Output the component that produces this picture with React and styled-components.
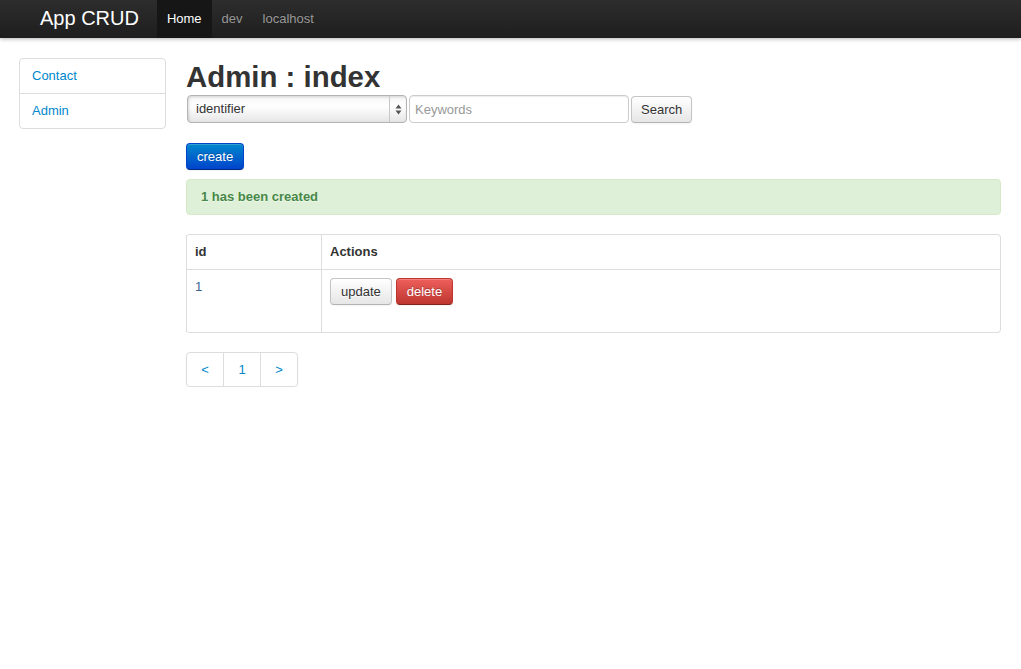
import * as React from "react"
import styled, { createGlobalStyle } from "styled-components"

const GlobalStyle = createGlobalStyle`
  body {
    margin: 0;
    background: #fff;
    font-family: "Liberation Sans", Arial, sans-serif;
    font-size: 13px;
    line-height: 20px;
    color: #333;
  }
`

const App = () => {
  return (
    <>
      <GlobalStyle />
      <Navbar>
        <Brand>App CRUD</Brand>
        <NavItem active>Home</NavItem>
        <NavItem>dev</NavItem>
        <NavItem>localhost</NavItem>
      </Navbar>
      <Main>
        <Sidebar>
          <SideLink>Contact</SideLink>
          <SideLink>Admin</SideLink>
        </Sidebar>
        <Content>
          <Title>Admin : index</Title>
          <SearchForm>
            <SelectBox>
              <SelectLabel>identifier</SelectLabel>
              <SelectArrows>
                <svg width="7" height="11" viewBox="0 0 7 11">
                  <path d="M3.5 0.5 L6.5 4.5 H0.5 Z" fill="#555" />
                  <path d="M3.5 10.5 L6.5 6.5 H0.5 Z" fill="#555" />
                </svg>
              </SelectArrows>
            </SelectBox>
            <Input placeholder="Keywords" />
            <Button compact>Search</Button>
          </SearchForm>
          <ButtonRow>
            <Button variant="primary">create</Button>
          </ButtonRow>
          <Alert>1 has been created</Alert>
          <Table>
            <thead>
              <tr>
                <Th width="118">id</Th>
                <Th>Actions</Th>
              </tr>
            </thead>
            <tbody>
              <tr>
                <Td><IdText>1</IdText></Td>
                <Td>
                  <Actions>
                    <Button>update</Button>
                    <Button variant="danger">delete</Button>
                  </Actions>
                </Td>
              </tr>
            </tbody>
          </Table>
          <Pagination>
            <PageLink>&lt;</PageLink>
            <PageLink>1</PageLink>
            <PageLink>&gt;</PageLink>
          </Pagination>
        </Content>
      </Main>
    </>
  )
}

export default App

const Navbar = styled.div`
  display: flex;
  align-items: stretch;
  height: 38px;
  padding-left: 20px;
  background: linear-gradient(180deg, #2d2d2d 0%, #1e1e1e 100%);
  box-shadow: 0 1px 4px rgba(0, 0, 0, 0.3);
  position: relative;
  z-index: 2;
`
const Brand = styled.div`
  display: flex;
  align-items: center;
  padding: 0 18px 0 20px;
  font-size: 20px;
  color: #fff;
  margin-top: -3px;
`
const NavItem = styled.div`
  display: flex;
  align-items: center;
  padding: 0 10px;
  font-size: 13px;
  color: ${p => (p.active ? "#fff" : "#999")};
  background: ${p => (p.active ? "#161616" : "transparent")};
  text-shadow: 0 -1px 0 rgba(0, 0, 0, 0.25);
`
const Main = styled.div`
  display: flex;
  gap: 20px;
  padding: 20px 20px 0 19px;
`
const Sidebar = styled.div`
  display: flex;
  flex-direction: column;
  width: 147px;
  flex: none;
  align-self: flex-start;
  border: 1px solid #ddd;
  border-radius: 4px;
  box-sizing: border-box;
`
const SideLink = styled.a`
  display: block;
  padding: 7px 12px;
  line-height: 20px;
  color: #0088cc;
  & + & {
    border-top: 1px solid #ddd;
  }
`
const Content = styled.div`
  flex: 1;
  min-width: 0;
`
const Title = styled.h2`
  margin: 0;
  font-size: 29.4px;
  line-height: 37px;
  font-weight: bold;
  color: #333;
`
const SearchForm = styled.div`
  display: flex;
  align-items: center;
  gap: 2px;
  height: 28px;
  margin-left: 1px;
`
const SelectBox = styled.div`
  display: flex;
  width: 220px;
  height: 28px;
  box-sizing: border-box;
  border: 1px solid #b4b4b4;
  border-radius: 4px;
  background: linear-gradient(180deg, #f6f6f6 0%, #ffffff 40%, #e6e6e6 100%);
  box-shadow: inset 1px 1px 3px rgba(0, 0, 0, 0.15);
`
const SelectLabel = styled.div`
  flex: 1;
  padding-left: 8px;
  line-height: 26px;
  color: #333;
`
const SelectArrows = styled.div`
  width: 16px;
  display: flex;
  align-items: center;
  justify-content: center;
  border-left: 1px solid #c8c8c8;
`
const Input = styled.input`
  width: 220px;
  height: 28px;
  box-sizing: border-box;
  border: 1px solid #ccc;
  border-radius: 4px;
  padding: 4px 5px;
  font-family: inherit;
  font-size: 13px;
  color: #555;
  box-shadow: inset 0 1px 1px rgba(0, 0, 0, 0.075);
  outline: none;
  &::placeholder {
    color: #999;
  }
`
const variants = {
  default: `
    color: #333;
    background: linear-gradient(180deg, #ffffff 0%, #e6e6e6 100%);
    border-color: #c5c5c5 #c5c5c5 #b3b3b3;
    text-shadow: 0 1px 1px rgba(255, 255, 255, 0.75);
  `,
  primary: `
    color: #fff;
    background: linear-gradient(180deg, #0088cc 0%, #0044cc 100%);
    border-color: #0044cc #0044cc #002a80;
    text-shadow: 0 -1px 0 rgba(0, 0, 0, 0.25);
  `,
  danger: `
    color: #fff;
    background: linear-gradient(180deg, #ee5f5b 0%, #bd362f 100%);
    border-color: #bd362f #bd362f #802420;
    text-shadow: 0 -1px 0 rgba(0, 0, 0, 0.25);
  `,
}
const Button = styled.button`
  height: 27px;
  box-sizing: border-box;
  padding: 0 ${p => (p.compact ? "9px" : "10px")};
  font-family: inherit;
  font-size: 13px;
  line-height: 25px;
  border: 1px solid;
  border-radius: 4px;
  box-shadow: inset 0 1px 0 rgba(255, 255, 255, 0.2), 0 1px 2px rgba(0, 0, 0, 0.05);
  cursor: pointer;
  ${p => variants[p.variant || "default"]}
`
const ButtonRow = styled.div`
  display: flex;
  margin-top: 20px;
`
const Alert = styled.div`
  margin-top: 9px;
  padding: 7px 14px;
  line-height: 20px;
  background: #dff0d8;
  border: 1px solid #d6e9c6;
  border-radius: 4px;
  color: #468847;
  font-weight: bold;
  text-shadow: 0 1px 0 rgba(255, 255, 255, 0.5);
`
const Table = styled.table`
  width: 100%;
  margin-top: 19px;
  border: 1px solid #ddd;
  border-collapse: separate;
  border-spacing: 0;
  border-left: 0;
  border-radius: 4px;
`
const Th = styled.th`
  text-align: left;
  padding: 7px 8px;
  line-height: 20px;
  font-weight: bold;
  color: #333;
  border-left: 1px solid #ddd;
  vertical-align: top;
`
const Td = styled.td`
  padding: 7px 8px 8px;
  line-height: 20px;
  border-left: 1px solid #ddd;
  border-top: 1px solid #ddd;
  vertical-align: top;
`
const IdText = styled.span`
  color: #3a6590;
`
const Actions = styled.div`
  display: flex;
  gap: 4px;
  padding-top: 1px;
  margin-bottom: 19px;
`
const Pagination = styled.div`
  display: inline-flex;
  margin-top: 19px;
  border: 1px solid #ddd;
  border-radius: 4px;
  box-shadow: 0 1px 2px rgba(0, 0, 0, 0.05);
`
const PageLink = styled.a`
  width: 36px;
  text-align: center;
  padding: 7px 0;
  line-height: 19px;
  color: #0088cc;
  & + & {
    border-left: 1px solid #ddd;
  }
`
